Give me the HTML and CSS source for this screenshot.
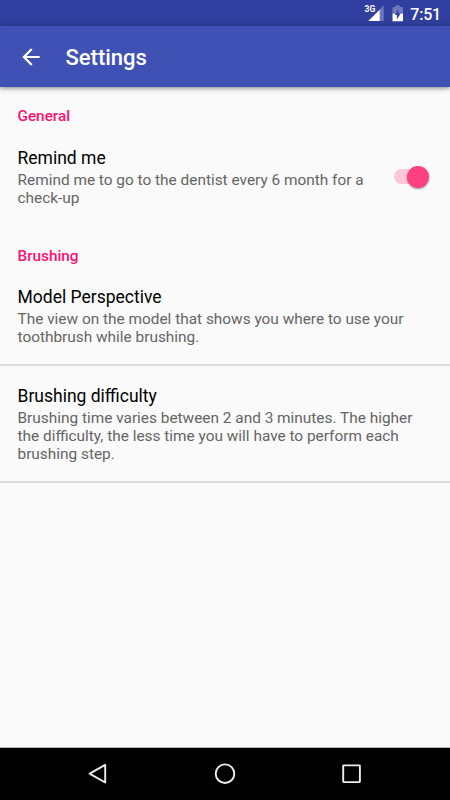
FILE: index.html
```html
<!DOCTYPE html>
<html lang="en">
<head>
    <meta charset="UTF-8">
    <meta name="viewport" content="width=device-width, initial-scale=1.0">
    <title>Settings</title>
    <link rel="stylesheet" href="styles.css">
</head>
<body>
    <div class="status-bar">
        <svg class="signal" width="20" height="18" viewBox="0 0 20 18">
            <path d="M18.7 0.3V16.1H3.4z" fill="#fff" fill-opacity="0.3"/>
            <path d="M14.7 4.8V16.1H3.4z" fill="#fff"/>
            <text class="network" x="-0.4" y="7.3">3G</text>
        </svg>
        <svg class="battery" width="12" height="17" viewBox="0 0 12 17">
            <path d="M3.6 0.3h4.2v1.7h2.3q0.9 0 0.9 0.9v5.6H0.5V2.9q0-0.9 0.9-0.9h2.2z" fill="#fff" fill-opacity="0.3"/>
            <path d="M0.5 8.5H11v6.9q0 0.9-0.9 0.9H1.4q-0.9 0-0.9-0.9z" fill="#fff"/>
            <path d="M6.4 4.2L2.8 10.1h2.1v4.3l3.8-6.1H6.4z" fill="#303f9f"/>
        </svg>
        <span class="clock">7:51</span>
    </div>

    <header class="app-bar">
        <svg class="back" width="26" height="26" viewBox="0 0 24 24">
            <path d="M20 11H7.83l5.59-5.59L12 4l-8 8 8 8 1.41-1.41L7.83 13H20v-2z" fill="#fff"/>
        </svg>
        <h1>Settings</h1>
    </header>

    <main class="content">
        <h2 class="category">General</h2>
        <div class="preference">
            <div class="preference-text">
                <h3>Remind me</h3>
                <p>Remind me to go to the dentist every 6 month for a check-up</p>
            </div>
            <div class="switch"><div class="thumb"></div></div>
        </div>

        <h2 class="category">Brushing</h2>
        <div class="preference divider">
            <div class="preference-text">
                <h3>Model Perspective</h3>
                <p>The view on the model that shows you where to use your toothbrush while brushing.</p>
            </div>
        </div>
        <div class="preference divider">
            <div class="preference-text">
                <h3>Brushing difficulty</h3>
                <p>Brushing time varies between 2 and 3 minutes. The higher the difficulty, the less time you will have to perform each brushing step.</p>
            </div>
        </div>
    </main>

    <nav class="nav-bar">
        <svg width="24" height="24" viewBox="0 0 24 24">
            <path d="M19.2 2.9v17.6L3.6 11.7z"/>
        </svg>
        <svg width="24" height="24" viewBox="0 0 24 24">
            <circle cx="12" cy="11.7" r="9.3"/>
        </svg>
        <svg width="24" height="24" viewBox="0 0 24 24">
            <rect x="3.2" y="3.4" width="16.7" height="16.7" rx="0.5"/>
        </svg>
    </nav>
</body>
</html>
```

FILE: styles.css
```css
* {
    box-sizing: border-box;
}
body {
    margin: 0;
    height: 100vh;
    display: flex;
    flex-direction: column;
    overflow: hidden;
    font-family: Roboto, sans-serif;
    background-color: #fafafa;
}
h1, h2, h3, p {
    margin: 0;
}
.status-bar {
    height: 26px;
    flex: none;
    display: flex;
    align-items: center;
    justify-content: flex-end;
    padding-right: 9px;
    background-color: #303f9f;
    color: white;
}
.signal {
    overflow: visible;
    margin: 2px 7px 0 0;
}
.network {
    font-size: 8.5px;
    font-weight: 700;
    fill: white;
}
.battery {
    margin: 1px 6px 0 0;
}
.clock {
    font-size: 16px;
    font-weight: 500;
    line-height: 24px;
    padding-top: 3px;
    letter-spacing: -0.2px;
}
.app-bar {
    height: 61px;
    flex: none;
    display: flex;
    align-items: center;
    padding: 1px 18px 0;
    background-color: #3f51b5;
    color: white;
    box-shadow: 0 1px 5px rgba(0, 0, 0, 0.5);
}
.app-bar h1 {
    margin-left: 21.5px;
    padding-top: 1px;
    font-size: 22px;
    font-weight: 500;
}
.content {
    flex: 1;
}
.category {
    padding: 20px 17.5px 4px;
    font-size: 15.3px;
    font-weight: 500;
    line-height: 18px;
    color: #ff1070;
}
.preference + .category {
    padding: 22px 17.5px 3px;
}
.preference {
    display: flex;
    align-items: center;
    justify-content: space-between;
    padding: 19px 17.5px 18px;
}
.preference-text {
    max-width: 400px;
}
.preference h3 {
    font-size: 17.5px;
    font-weight: 400;
    line-height: 21px;
    color: black;
}
.preference p {
    margin-top: 2px;
    font-size: 15.4px;
    line-height: 18px;
    color: #656565;
}
.divider {
    border-bottom: 2px solid #dcdcdc;
}
.divider + .divider {
    padding-top: 20px;
}
.switch {
    flex: none;
    display: flex;
    align-items: center;
    justify-content: flex-end;
    width: 35px;
    height: 15px;
    margin: 0 4px 2px 0;
    border-radius: 8px;
    background-color: #fdc6d9;
}
.thumb {
    width: 22px;
    height: 22px;
    border-radius: 50%;
    background-color: #ff4081;
    box-shadow: 0 1px 2px rgba(0, 0, 0, 0.4);
}
.nav-bar {
    height: 53px;
    flex: none;
    display: flex;
    align-items: center;
    justify-content: center;
    gap: 103px;
    border-top: 1px solid #b0b0b0;
    background-color: black;
}
.nav-bar svg {
    fill: none;
    stroke: #eee;
    stroke-width: 1.9;
    stroke-linejoin: round;
}
```
